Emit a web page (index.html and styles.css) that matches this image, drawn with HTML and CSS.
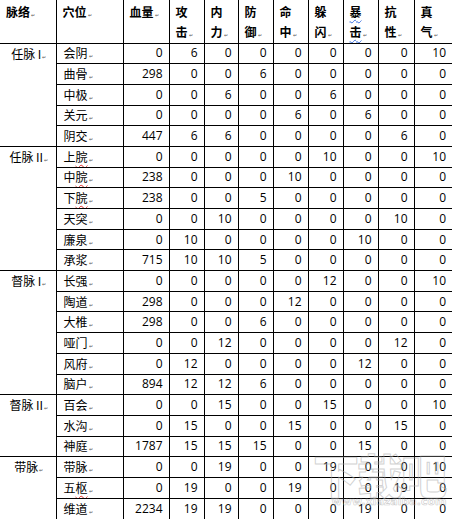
FILE: index.html
```html
<!DOCTYPE html>
<html lang="zh-CN">
<head>
<meta charset="utf-8">
<title>经脉穴位属性表</title>
<link rel="stylesheet" href="styles.css">
</head>
<body>
<div class="sheet">
<table class="grid">
  <colgroup>
    <col class="c-mai"><col class="c-xue"><col class="c-hp">
    <col class="c-s"><col class="c-s2"><col class="c-s"><col class="c-s"><col class="c-s"><col class="c-s"><col class="c-s3"><col class="c-last">
  </colgroup>
  <thead>
    <tr class="head">
      <th>脉络<span class="pm">↵</span></th>
      <th>穴位<span class="pm">↵</span></th>
      <th>血量<span class="pm">↵</span></th>
      <th>攻<br>击<span class="pm">↵</span></th>
      <th>内<br>力<span class="pm">↵</span></th>
      <th>防<br>御<span class="pm">↵</span></th>
      <th>命<br>中<span class="pm">↵</span></th>
      <th>躲<br>闪<span class="pm">↵</span></th>
      <th><span class="blue">暴</span><br><span class="blue">击</span><span class="pm">↵</span></th>
      <th>抗<br>性<span class="pm">↵</span></th>
      <th>真<br>气<span class="pm">↵</span></th>
    </tr>
  </thead>
  <tbody>
    <tr class="group"><td class="mai" rowspan="5">任脉 I<span class="pm">↵</span></td><td class="xue">会阴<span class="pm">↵</span></td><td>0</td><td>6</td><td>0</td><td>0</td><td>0</td><td>0</td><td>0</td><td>0</td><td>10</td></tr>
    <tr><td class="xue">曲骨<span class="pm">↵</span></td><td>298</td><td>0</td><td>0</td><td>6</td><td>0</td><td>0</td><td>0</td><td>0</td><td>0</td></tr>
    <tr><td class="xue">中极<span class="pm">↵</span></td><td>0</td><td>0</td><td>6</td><td>0</td><td>0</td><td>6</td><td>0</td><td>0</td><td>0</td></tr>
    <tr><td class="xue">关元<span class="pm">↵</span></td><td>0</td><td>0</td><td>0</td><td>0</td><td>6</td><td>0</td><td>6</td><td>0</td><td>0</td></tr>
    <tr><td class="xue">阴交<span class="pm">↵</span></td><td>447</td><td>6</td><td>6</td><td>0</td><td>0</td><td>0</td><td>0</td><td>6</td><td>0</td></tr>

    <tr class="group"><td class="mai" rowspan="6">任脉 II<span class="pm">↵</span></td><td class="xue">上<span class="red">脘</span><span class="pm">↵</span></td><td>0</td><td>0</td><td>0</td><td>0</td><td>0</td><td>10</td><td>0</td><td>0</td><td>10</td></tr>
    <tr><td class="xue">中<span class="red">脘</span><span class="pm">↵</span></td><td>238</td><td>0</td><td>0</td><td>0</td><td>10</td><td>0</td><td>0</td><td>0</td><td>0</td></tr>
    <tr><td class="xue">下<span class="red">脘</span><span class="pm">↵</span></td><td>238</td><td>0</td><td>0</td><td>5</td><td>0</td><td>0</td><td>0</td><td>0</td><td>0</td></tr>
    <tr><td class="xue">天突<span class="pm">↵</span></td><td>0</td><td>0</td><td>10</td><td>0</td><td>0</td><td>0</td><td>0</td><td>10</td><td>0</td></tr>
    <tr><td class="xue">廉泉<span class="pm">↵</span></td><td>0</td><td>10</td><td>0</td><td>0</td><td>0</td><td>0</td><td>10</td><td>0</td><td>0</td></tr>
    <tr><td class="xue">承浆<span class="pm">↵</span></td><td>715</td><td>10</td><td>10</td><td>5</td><td>0</td><td>0</td><td>0</td><td>0</td><td>0</td></tr>

    <tr class="group"><td class="mai" rowspan="6">督脉 I<span class="pm">↵</span></td><td class="xue">长强<span class="pm">↵</span></td><td>0</td><td>0</td><td>0</td><td>0</td><td>0</td><td>12</td><td>0</td><td>0</td><td>10</td></tr>
    <tr><td class="xue">陶道<span class="pm">↵</span></td><td>298</td><td>0</td><td>0</td><td>0</td><td>12</td><td>0</td><td>0</td><td>0</td><td>0</td></tr>
    <tr><td class="xue">大椎<span class="pm">↵</span></td><td>298</td><td>0</td><td>0</td><td>6</td><td>0</td><td>0</td><td>0</td><td>0</td><td>0</td></tr>
    <tr><td class="xue">哑门<span class="pm">↵</span></td><td>0</td><td>0</td><td>12</td><td>0</td><td>0</td><td>0</td><td>0</td><td>12</td><td>0</td></tr>
    <tr><td class="xue">风府<span class="pm">↵</span></td><td>0</td><td>12</td><td>0</td><td>0</td><td>0</td><td>0</td><td>12</td><td>0</td><td>0</td></tr>
    <tr><td class="xue">脑户<span class="pm">↵</span></td><td>894</td><td>12</td><td>12</td><td>6</td><td>0</td><td>0</td><td>0</td><td>0</td><td>0</td></tr>

    <tr class="group"><td class="mai" rowspan="3">督脉 II<span class="pm">↵</span></td><td class="xue">百会<span class="pm">↵</span></td><td>0</td><td>0</td><td>15</td><td>0</td><td>0</td><td>15</td><td>0</td><td>0</td><td>10</td></tr>
    <tr><td class="xue">水沟<span class="pm">↵</span></td><td>0</td><td>15</td><td>0</td><td>0</td><td>15</td><td>0</td><td>0</td><td>15</td><td>0</td></tr>
    <tr><td class="xue">神庭<span class="pm">↵</span></td><td>1787</td><td>15</td><td>15</td><td>15</td><td>0</td><td>0</td><td>15</td><td>0</td><td>0</td></tr>

    <tr class="group"><td class="mai" rowspan="3">带脉<span class="pm">↵</span></td><td class="xue">带脉<span class="pm">↵</span></td><td>0</td><td>0</td><td>19</td><td>0</td><td>0</td><td>19</td><td>0</td><td>0</td><td>10</td></tr>
    <tr><td class="xue">五<span class="red">枢</span><span class="pm">↵</span></td><td>0</td><td>19</td><td>0</td><td>0</td><td>19</td><td>0</td><td>0</td><td>19</td><td>0</td></tr>
    <tr><td class="xue">维道<span class="pm">↵</span></td><td>2234</td><td>19</td><td>19</td><td>0</td><td>0</td><td>0</td><td>19</td><td>0</td><td>0</td></tr>
  </tbody>
</table>
<div class="watermark" aria-hidden="true">
  <div class="wm-big">下载吧</div>
  <div class="wm-url">www.xiazaiba.com</div>
</div>
</div>
</body>
</html>
```

FILE: styles.css
```css
html, body {
  margin: 0;
  padding: 0;
  background: #ffffff;
}

body {
  font-family: "Open Sans", "Noto Sans CJK SC", sans-serif;
  font-size: 12px;
  color: #000000;
}

.sheet {
  position: relative;
  width: 452px;
  height: 519px;
  overflow: hidden;
}

.grid {
  border-collapse: collapse;
  table-layout: fixed;
  width: 452px;
}

.c-mai { width: 56px; }
.c-xue { width: 67px; }
.c-hp { width: 46px; }
.c-s { width: 35px; }
.c-s2 { width: 34px; }
.c-s3 { width: 36px; }
.c-last { width: 38px; }

.grid th,
.grid td {
  padding: 0 6px;
  border: 0;
  border-left: 1px solid #000;
  white-space: nowrap;
  overflow: hidden;
  box-sizing: border-box;
}

.grid th:first-child,
.grid td.mai {
  border-left: 0;
}

.head th {
  height: 43px;
  padding-top: 2px;
  vertical-align: top;
  text-align: left;
  font-family: "Noto Sans CJK SC", sans-serif;
  font-weight: bold;
  line-height: 20px;
  border-bottom: 1px solid #000;
}

.grid tbody td {
  height: 20.7px;
  line-height: 14px;
  text-align: right;
  vertical-align: middle;
  border-top: 1px solid #000;
}

.grid tbody td.xue {
  text-align: left;
  padding-left: 7px;
  font-family: "Noto Sans CJK SC", sans-serif;
}

.grid tbody td.mai {
  text-align: center;
  vertical-align: top;
  padding: 3px 0 0 2px;
  font-family: "Noto Sans CJK SC", sans-serif;
}

.pm {
  font-size: 5px;
  line-height: 0;
  color: #555;
  margin-left: 1px;
  font-weight: normal;
}

.red {
  text-decoration: underline wavy #e0302a;
  text-decoration-thickness: 1px;
  text-underline-offset: 2px;
}

.blue {
  text-decoration: underline wavy #3a6fe0;
  text-decoration-thickness: 1px;
  text-underline-offset: 2px;
}

.watermark {
  position: absolute;
  left: 306px;
  top: 444px;
  width: 146px;
  pointer-events: none;
  text-align: center;
}

.wm-big {
  font-family: "Noto Sans CJK SC", sans-serif;
  font-weight: 900;
  font-size: 46px;
  line-height: 58px;
  letter-spacing: -2px;
  color: transparent;
  -webkit-text-stroke: 1px rgba(170, 170, 170, 0.55);
}

.wm-url {
  margin-top: -6px;
  font-family: "DejaVu Sans", sans-serif;
  font-weight: bold;
  font-size: 11px;
  line-height: 12px;
  padding-left: 20px;
  color: transparent;
  -webkit-text-stroke: 0.6px rgba(170, 170, 170, 0.6);
}
```
